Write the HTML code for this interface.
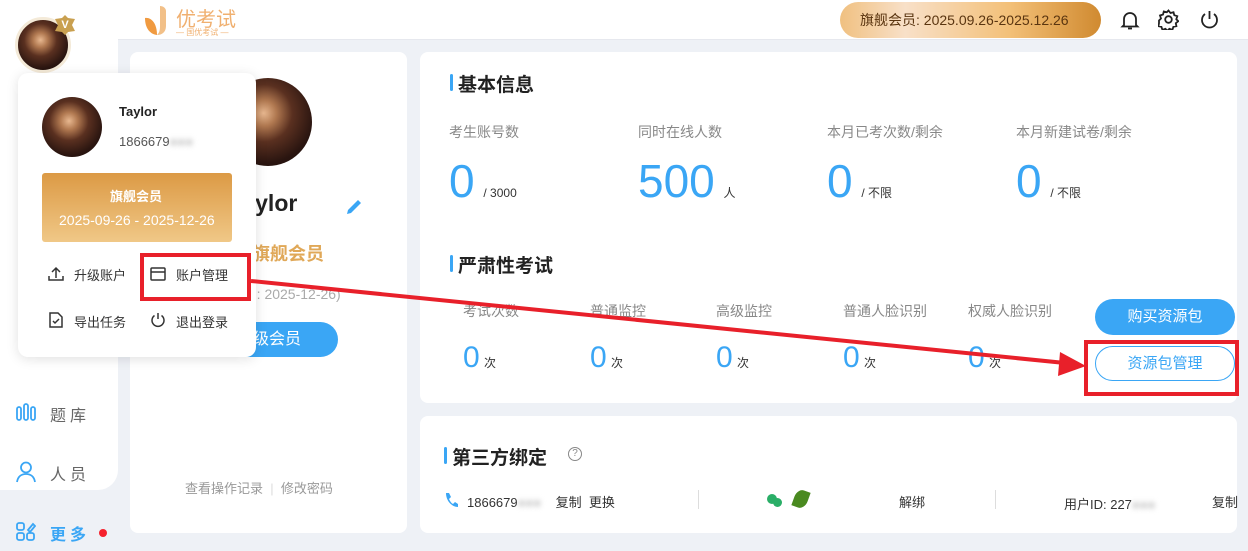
<!DOCTYPE html>
<html><head><meta charset="utf-8"><style>
*{margin:0;padding:0;box-sizing:border-box}
body{width:1248px;height:551px;overflow:hidden;background:#eef1f6;font-family:"Liberation Sans","Noto Sans CJK SC",sans-serif;position:relative;color:#333}
.abs{position:absolute}
.card{position:absolute;background:#fff;border-radius:8px}
.av{border-radius:50%;background:radial-gradient(circle at 45% 40%,#e8b890 0,#b07850 18%,#5a3020 40%,#2a1510 70%,#1a0c08 100%)}
.lbl{position:absolute;font-size:14px;color:#888}
.big{position:absolute;color:#3aa6f5;font-size:46px;line-height:1}
.unit{font-size:12px;color:#333;margin-left:-4px}
.h{position:absolute;font-size:19px;font-weight:bold;color:#222}
.h:before{content:"";position:absolute;left:-8px;top:4px;width:3px;height:17px;background:#3aa6f5;border-radius:2px}
</style></head><body>
<div class="abs" style="left:0;top:0;width:118px;height:490px;background:#fff;border-radius:0 0 20px 0"></div>
<div class="abs av" style="left:15px;top:17px;width:56px;height:56px;border:3px solid #f4ead8"></div>
<div class="abs" style="left:55px;top:15px;width:20px;height:20px;background:#c9a050;clip-path:polygon(50% 0,65% 15%,100% 20%,85% 50%,100% 80%,65% 85%,50% 100%,35% 85%,0 80%,15% 50%,0 20%,35% 15%);color:#fff;font-size:11px;text-align:center;line-height:20px;font-weight:bold">V</div>
<svg class="abs" style="left:16px;top:402px" width="20" height="20" fill="none" stroke="#3aa6f5" stroke-width="1.8"><rect x="1" y="5" width="4" height="13" rx="2"/><rect x="8" y="2" width="4" height="16" rx="2"/><rect x="15" y="5" width="4" height="13" rx="2"/></svg>
<div class="abs" style="left:50px;top:402px;font-size:16px;color:#666;letter-spacing:4px">题库</div>
<svg class="abs" style="left:16px;top:461px" width="20" height="22" fill="none" stroke="#3aa6f5" stroke-width="1.8"><circle cx="10" cy="6.5" r="5"/><path d="M1 21c1-6 5-8 9-8s8 2 9 8"/></svg>
<div class="abs" style="left:50px;top:461px;font-size:16px;color:#666;letter-spacing:4px">人员</div>
<svg class="abs" style="left:16px;top:522px" width="20" height="20" fill="none" stroke="#3aa6f5" stroke-width="1.8"><rect x="1" y="1" width="7" height="7" rx="2"/><rect x="1" y="11" width="7" height="7" rx="2"/><rect x="11" y="11" width="7" height="7" rx="2"/><path d="M12 8l5-6 2 2-5 6z"/></svg>
<div class="abs" style="left:50px;top:521px;font-size:16px;color:#3aa6f5;letter-spacing:4px;font-weight:bold">更多</div>
<div class="abs" style="left:99px;top:529px;width:8px;height:8px;border-radius:50%;background:#f5222d"></div>
<div class="abs" style="left:118px;top:0;width:1130px;height:40px;background:#fff;border-bottom:1px solid #e6e8ee"></div>
<svg class="abs" style="left:142px;top:3px" width="35" height="34"><path d="M3 15c6-1 12 5 12 17C7 31 3 24 3 15z" fill="#f09a40"/><path d="M18 3c3 0 6 2 6 5v15c0 6-4 9-9 9 3-3 3-6 3-10z" fill="#f2c088"/></svg>
<div class="abs" style="left:176px;top:3px;font-size:20px;color:#f0b070">优考试</div>
<div class="abs" style="left:176px;top:27px;font-size:8px;color:#f0b070">— 国优考试 —</div>
<div class="abs" style="left:840px;top:2px;width:261px;height:36px;border-radius:18px;background:linear-gradient(90deg,#f0c080,#f8e0c8 25%,#f3c078 65%,#d08a30);font-size:14px;color:#5a3510;line-height:36px;padding-left:20px">旗舰会员:&nbsp;2025.09.26-2025.12.26</div>
<svg class="abs" style="left:1120px;top:10px" width="20" height="20" fill="none" stroke="#222" stroke-width="1.8"><path d="M4 15V9a6 6 0 0112 0v6l1.5 1.5h-15z"/><path d="M8 18.5h4"/></svg>
<svg class="abs" style="left:1158px;top:9px" width="21" height="21" fill="none" stroke="#222" stroke-width="1.8"><path d="M10.5 1.5l2 2.5 3-.8.8 3 3 1-1 3 2 2-2.5 2 .6 3-3 .6-1 3-3-1-2 2-2-2-3 1-1-3-3-.6.6-3L1 11.5l2-2-1-3 3-1 .8-3 3 .8z"/><circle cx="10.5" cy="10.5" r="3.3"/></svg>
<svg class="abs" style="left:1199px;top:9px" width="21" height="21" fill="none" stroke="#222" stroke-width="1.8"><path d="M10.5 2v8"/><path d="M6 5a7.5 7.5 0 109 0"/></svg>
<div class="card" style="left:130px;top:52px;width:277px;height:481px"></div>
<div class="abs av" style="left:224px;top:78px;width:88px;height:88px"></div>
<div class="abs" style="left:230px;top:190px;font-size:23px;font-weight:bold;color:#222">Taylor</div>
<svg class="abs" style="left:345px;top:197px" width="19" height="19"><path d="M2 17l1-4 10-10 3 3-10 10z" fill="#3aa6f5"/></svg>
<div class="abs" style="left:252px;top:240px;font-size:18px;font-weight:bold;color:#e0a858">旗舰会员</div>
<div class="abs" style="left:210px;top:284px;font-size:14px;color:#aaa">(有效期: 2025-12-26)</div>
<div class="abs" style="left:200px;top:322px;width:138px;height:35px;background:#3aa6f5;border-radius:18px;color:#fff;font-size:16px;line-height:35px;text-align:center">升级会员</div>
<div class="abs" style="left:185px;top:478px;font-size:13px;color:#999">查看操作记录 &nbsp;<span style="color:#ddd">|</span>&nbsp; 修改密码</div>
<div class="abs" style="left:18px;top:73px;width:238px;height:284px;background:#fff;border-radius:10px;box-shadow:0 2px 12px rgba(0,0,0,.12)"></div>
<div class="abs av" style="left:42px;top:97px;width:60px;height:60px"></div>
<div class="abs" style="left:119px;top:104px;font-size:13px;font-weight:bold;color:#222">Taylor</div>
<div class="abs" style="left:119px;top:134px;font-size:13px;color:#555">1866679<span style="filter:blur(3px);color:#bbb">●●●</span></div>
<div class="abs" style="left:42px;top:173px;width:190px;height:69px;border-radius:3px;background:linear-gradient(180deg,#dc9a45,#f0c887)"></div>
<div class="abs" style="left:110px;top:186px;font-size:13px;color:#fff;font-weight:bold">旗舰会员</div>
<div class="abs" style="left:59px;top:212px;font-size:14px;color:#fff">2025-09-26 - 2025-12-26</div>
<svg class="abs" style="left:48px;top:266px" width="16" height="16" fill="none" stroke="#333" stroke-width="1.5"><path d="M8 12V2M4 6l4-4 4 4M1 10v4h14v-4"/></svg>
<div class="abs" style="left:74px;top:265px;font-size:13px;color:#333">升级账户</div>
<svg class="abs" style="left:150px;top:266px" width="16" height="16" fill="none" stroke="#333" stroke-width="1.5"><rect x="1" y="2" width="14" height="12" rx="1"/><path d="M1 6h14"/></svg>
<div class="abs" style="left:176px;top:265px;font-size:13px;color:#333">账户管理</div>
<svg class="abs" style="left:48px;top:312px" width="16" height="16" fill="none" stroke="#333" stroke-width="1.5"><path d="M2 1h8l4 4v10H2z"/><path d="M5 9l2 2 4-4"/></svg>
<div class="abs" style="left:74px;top:312px;font-size:13px;color:#333">导出任务</div>
<svg class="abs" style="left:150px;top:312px" width="16" height="16" fill="none" stroke="#333" stroke-width="1.5"><path d="M8 1v6"/><path d="M4.5 3.5a6 6 0 107 0"/></svg>
<div class="abs" style="left:176px;top:312px;font-size:13px;color:#333">退出登录</div>
<div class="abs" style="left:140px;top:253px;width:111px;height:48px;border:4px solid #e8202a"></div>
<div class="card" style="left:420px;top:52px;width:817px;height:351px"></div>
<div class="h" style="left:458px;top:70px">基本信息</div>
<div class="lbl" style="left:449px;top:122px">考生账号数</div>
<div class="lbl" style="left:638px;top:122px">同时在线人数</div>
<div class="lbl" style="left:827px;top:122px">本月已考次数/剩余</div>
<div class="lbl" style="left:1016px;top:122px">本月新建试卷/剩余</div>
<div class="big" style="left:449px;top:158px">0 <span class="unit">/ 3000</span></div>
<div class="big" style="left:638px;top:158px">500 <span class="unit">人</span></div>
<div class="big" style="left:827px;top:158px">0 <span class="unit">/ 不限</span></div>
<div class="big" style="left:1016px;top:158px">0 <span class="unit">/ 不限</span></div>
<div class="h" style="left:458px;top:251px">严肃性考试</div>
<div class="lbl" style="left:463px;top:301px">考试次数</div>
<div class="lbl" style="left:590px;top:301px">普通监控</div>
<div class="lbl" style="left:716px;top:301px">高级监控</div>
<div class="lbl" style="left:843px;top:301px">普通人脸识别</div>
<div class="lbl" style="left:968px;top:301px">权威人脸识别</div>
<div class="big" style="left:463px;top:343px;font-size:30px">0 <span class="unit">次</span></div>
<div class="big" style="left:590px;top:343px;font-size:30px">0 <span class="unit">次</span></div>
<div class="big" style="left:716px;top:343px;font-size:30px">0 <span class="unit">次</span></div>
<div class="big" style="left:843px;top:343px;font-size:30px">0 <span class="unit">次</span></div>
<div class="big" style="left:968px;top:343px;font-size:30px">0 <span class="unit">次</span></div>
<div class="abs" style="left:1095px;top:299px;width:140px;height:36px;border-radius:18px;background:#3aa6f5;color:#fff;font-size:15px;text-align:center;line-height:36px">购买资源包</div>
<div class="abs" style="left:1095px;top:346px;width:140px;height:35px;border-radius:18px;border:1px solid #3aa6f5;background:#fff;color:#3aa6f5;font-size:15px;text-align:center;line-height:33px">资源包管理</div>
<div class="abs" style="left:1084px;top:340px;width:155px;height:56px;border:4px solid #e8202a"></div>
<div class="card" style="left:420px;top:416px;width:817px;height:117px"></div>
<div class="h" style="left:452px;top:443px">第三方绑定</div>
<div class="abs" style="left:568px;top:447px;width:14px;height:14px;border:1px solid #888;border-radius:50%;font-size:10px;color:#888;text-align:center;line-height:12px">?</div>
<svg class="abs" style="left:444px;top:492px" width="14" height="16"><path d="M2 1l3 0 2 4-2 2c1 2 2 4 4 5l2-2 3 2v3c-6 0-12-6-12-14z" fill="#3aa6f5"/></svg>
<div class="abs" style="left:467px;top:492px;font-size:13px;color:#333">1866679<span style="filter:blur(3px);color:#bbb">●●●</span> &nbsp;&nbsp; 复制 &nbsp;更换</div>
<div class="abs" style="left:698px;top:490px;width:1px;height:19px;background:#ddd"></div>
<div class="abs" style="left:767px;top:494px;width:10px;height:10px;border-radius:50%;background:#2aae67"></div>
<div class="abs" style="left:773px;top:498px;width:9px;height:9px;border-radius:50%;background:#2aae67"></div>
<div class="abs" style="left:794px;top:490px;width:14px;height:18px;background:#4a8a20;border-radius:50% 0 50% 0;transform:rotate(20deg)"></div>
<div class="abs" style="left:899px;top:492px;font-size:13px;color:#333">解绑</div>
<div class="abs" style="left:995px;top:490px;width:1px;height:19px;background:#ddd"></div>
<div class="abs" style="left:1064px;top:494px;font-size:13px;color:#333">用户ID: 227<span style="filter:blur(3px);color:#bbb">●●●</span></div>
<div class="abs" style="left:1212px;top:492px;font-size:13px;color:#333">复制</div>
<svg class="abs" style="left:0;top:0" width="1248" height="551"><line x1="251" y1="281" x2="1075" y2="364" stroke="#e8202a" stroke-width="4"/><polygon points="1086,366 1060,352 1058,376" fill="#e8202a"/></svg>
</body></html>
